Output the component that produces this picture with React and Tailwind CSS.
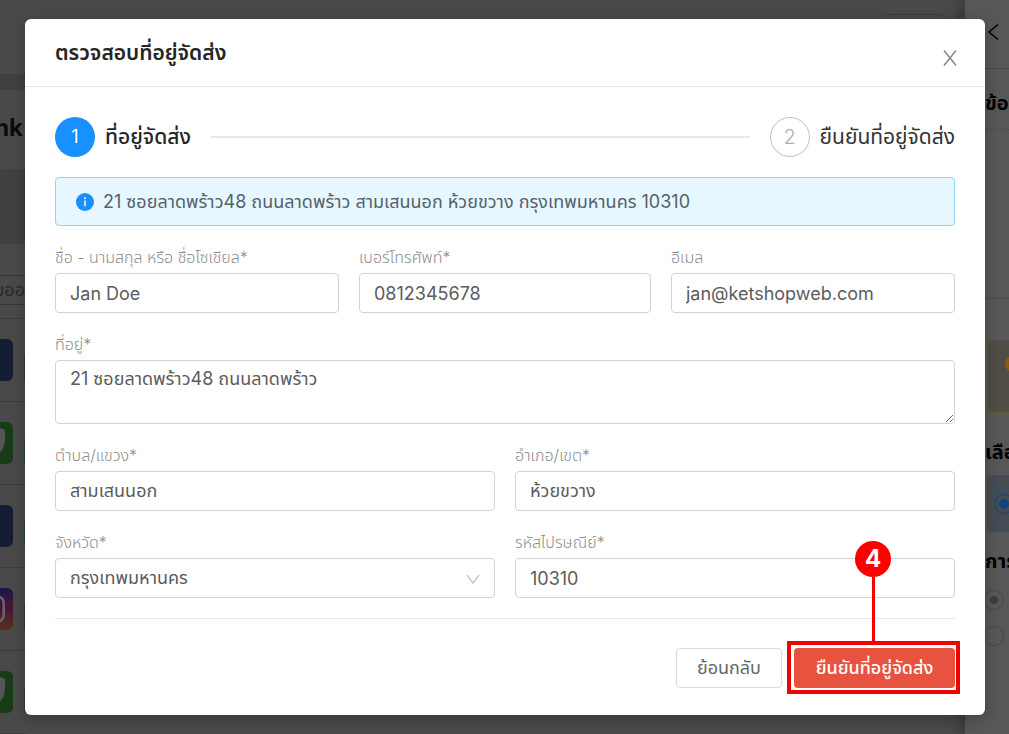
// App.jsx
import { useState } from "react";
import { FaInstagram } from "react-icons/fa";

const channels = [
  { id: 1, color: "bg-[#141d31]", accent: "bg-[#3a3a3a]", type: "facebook" },
  { id: 2, color: "bg-[#183c18]", accent: "bg-[#2b4640]", type: "line" },
  { id: 3, color: "bg-[#141d31]", accent: "bg-[#2b4640]", type: "facebook" },
  { id: 4, color: "bg-linear-to-b from-[#1d1248] via-[#4a1433] to-[#57301a]", accent: "bg-[#3a3a3a]", type: "instagram" },
  { id: 5, color: "bg-[#183c18]", accent: "bg-[#3a3a3a]", type: "line" },
];

function ChannelTile({ channel }) {
  return (
    <div className="flex h-[83px] shrink-0 items-center justify-between border-b border-[#3c3c3c]">
      <div className={`flex h-[42px] w-[13px] items-center justify-end overflow-hidden rounded-r-md ${channel.color}`}>
        {channel.type === "instagram" && <FaInstagram className="mr-[6px] size-8 shrink-0 text-[#6b6470]" />}
        {channel.type === "line" && (
          <svg viewBox="0 0 13 42" className="h-[42px] w-[13px]" aria-hidden="true">
            <path d="M0 6 L3 7 Q5 7 5 11 V16 Q5 26 0 30 Z" fill="#555" />
          </svg>
        )}
      </div>
      <div className={`mt-4 h-6 w-px ${channel.accent}`} />
    </div>
  );
}

function Backdrop() {
  return (
    <div className="absolute inset-0 flex overflow-hidden bg-[#494949]" aria-hidden="true">
      <div className="flex min-w-0 flex-1 flex-col">
        <div className="flex h-[74px] shrink-0 justify-end gap-[10px] overflow-hidden pt-[14px]">
          <div className="h-10 w-[62px] rounded-md border border-[#3c3c3c]" />
          <div className="h-10 w-[9px] rounded-l-md border border-r-0 border-[#3c3c3c]" />
        </div>
        <div className="h-4 shrink-0 bg-[#404143]" />
        <div className="flex h-[79px] w-[23px] shrink-0 items-center justify-end overflow-hidden pb-1 text-2xl font-bold text-[#0c0c0c]">
          nk
        </div>
        <div className="h-[75px] w-[25px] shrink-0 bg-[#404143]" />
        <div className="mt-[31px] flex h-[30px] w-[25px] shrink-0 items-center justify-end overflow-hidden border-y border-[#363636] text-lg text-[#2b2b2b]">
          บออ
        </div>
        <div className="mt-[13px] flex w-[25px] flex-col border-t border-[#3c3c3c]">
          {channels.map((c) => (
            <ChannelTile key={c.id} channel={c} />
          ))}
        </div>
      </div>
      <div className="flex w-11 shrink-0 flex-col bg-[#575757] pl-5 text-xl font-bold text-black shadow-[-6px_0_12px_rgba(0,0,0,0.2)]">
        <div className="flex h-[69px] shrink-0 items-center border-b border-[#474747] pb-1">
          <svg viewBox="0 0 16 20" className="ml-px h-5 w-4" fill="none" stroke="currentColor" strokeWidth="1.6">
            <path d="M12 2.5 L3 10 L12 17.5" />
          </svg>
        </div>
        <div className="flex h-[61px] shrink-0 items-center overflow-hidden border-b border-dashed border-[#4b4b4b] pt-2 whitespace-nowrap">ข้อ</div>
        <div className="h-[169px] shrink-0 border-b border-[#4b4b4b]" />
        <div className="mt-10 ml-[2px] flex h-[74px] shrink-0 overflow-hidden rounded-l border border-r-0 border-[#665b35] bg-[#4f4d45] pt-4 pl-[17px]">
          <div className="size-4 shrink-0 rounded-full bg-[#8a5a09]" />
        </div>
        <div className="flex h-[62px] shrink-0 items-center overflow-hidden pt-4 whitespace-nowrap">เลือ</div>
        <div className="ml-[2px] flex h-[57px] shrink-0 items-center overflow-hidden rounded-l border border-r-0 border-[#3f5058] bg-[#434c53] pl-[6px]">
          <div className="flex size-5 shrink-0 items-center justify-center rounded-full border border-[#11447a]">
            <div className="size-[10px] rounded-full bg-[#11447a]" />
          </div>
        </div>
        <div className="flex h-[58px] shrink-0 items-center overflow-hidden whitespace-nowrap">การ</div>
        <div className="flex shrink-0 flex-col gap-4">
          <div className="-ml-px flex size-5 items-center justify-center rounded-full border border-[#474747]">
            <div className="size-2 rounded-full bg-[#3c3c3c]" />
          </div>
          <div className="-ml-px size-5 rounded-full border border-[#474747]" />
        </div>
      </div>
    </div>
  );
}

const control =
  "w-full rounded border border-[#d3d3d3] bg-white px-[14px] text-lg/6 text-[#5c5c5c] outline-none focus:border-[#1890ff]";

function Field({ id, label, required, children }) {
  return (
    <div className="min-w-0">
      <label htmlFor={id} className="mb-[5px] block text-base/[22px] font-light whitespace-nowrap text-[#8c8c8c]">
        {label}
        {required && <span>*</span>}
      </label>
      {children}
    </div>
  );
}

function TextField({ id, label, required, value, onChange, type = "text" }) {
  return (
    <Field id={id} label={label} required={required}>
      <input id={id} name={id} type={type} value={value} onChange={onChange} className={`block h-10 ${control}`} />
    </Field>
  );
}

export default function App() {
  const [form, setForm] = useState({
    name: "Jan Doe",
    phone: "0812345678",
    email: "jan@ketshopweb.com",
    address: "21 ซอยลาดพร้าว48 ถนนลาดพร้าว",
    subdistrict: "สามเสนนอก",
    district: "ห้วยขวาง",
    province: "กรุงเทพมหานคร",
    zipcode: "10310",
  });

  const update = (e) => {
    const { name, value } = e.target;
    setForm((prev) => ({ ...prev, [name]: value }));
  };

  return (
    <div className="relative min-h-screen overflow-hidden pt-[19px] pr-6 pb-[19px] pl-[25px] font-['Inter','Noto_Sans_Thai','Noto_Sans',sans-serif]">
      <Backdrop />
      <div
        role="dialog"
        aria-labelledby="dialog-title"
        className="relative rounded-md bg-white shadow-[0_4px_14px_rgba(0,0,0,0.25)]"
      >
        <header className="flex h-[68px] items-center justify-between border-b border-[#e8e8e8] pr-[27px] pl-[30px]">
          <h1 id="dialog-title" className="text-[21px] font-semibold text-[#262626]">
            ตรวจสอบที่อยู่จัดส่ง
          </h1>
          <button type="button" aria-label="ปิด" className="mt-[10px] text-[#8c8c8c]">
            <svg viewBox="0 0 16 16" className="size-4" fill="none" stroke="currentColor" strokeWidth="1.6">
              <path d="M2 0.5 L14 15.5 M14 0.5 L2 15.5" />
            </svg>
          </button>
        </header>

        <form className="px-[30px] pt-[30px] pb-[27px]" onSubmit={(e) => e.preventDefault()}>
          <ol className="flex items-center">
            <li className="flex flex-1 items-center">
              <span className="flex size-10 items-center justify-center rounded-full bg-[#1890ff] text-lg text-white">1</span>
              <span className="ml-[10px] text-[21px]/8 font-medium whitespace-nowrap text-[#262626]">ที่อยู่จัดส่ง</span>
              <span className="mx-5 h-[2px] flex-1 bg-[#e8e8e8]" />
            </li>
            <li className="flex items-center">
              <span className="flex size-10 items-center justify-center rounded-full border border-[#bfbfbf] text-xl font-light text-[#b0b0b0]">2</span>
              <span className="ml-[10px] text-[21px]/8 whitespace-nowrap text-[#333]">ยืนยันที่อยู่จัดส่ง</span>
            </li>
          </ol>

          <div className="mt-5 flex h-[49px] items-center gap-[9px] rounded border border-[#91d5ea] bg-[#e6f7ff] px-5 text-lg text-[#56616a]">
            <svg viewBox="0 0 18 18" className="size-[18px] shrink-0" aria-hidden="true">
              <circle cx="9" cy="9" r="9" fill="#1890ff" />
              <circle cx="9" cy="5.2" r="1" fill="#fff" />
              <path d="M9 7.5 V13.2" stroke="#fff" strokeWidth="1.5" />
            </svg>
            <p className="whitespace-nowrap">21 ซอยลาดพร้าว48 ถนนลาดพร้าว สามเสนนอก ห้วยขวาง กรุงเทพมหานคร 10310</p>
          </div>

          <div className="mt-5 flex flex-col gap-5">
            <div className="grid grid-cols-[284fr_292fr_284fr] gap-5">
              <TextField id="name" label="ชื่อ - นามสกุล หรือ ชื่อโซเชียล" required value={form.name} onChange={update} />
              <TextField id="phone" label="เบอร์โทรศัพท์" required type="tel" value={form.phone} onChange={update} />
              <TextField id="email" label="อีเมล" type="email" value={form.email} onChange={update} />
            </div>

            <Field id="address" label="ที่อยู่" required>
              <textarea id="address" name="address" value={form.address} onChange={update} className={`block h-16 resize-y py-[6px] ${control}`} />
            </Field>

            <div className="grid grid-cols-2 gap-5">
              <TextField id="subdistrict" label="ตำบล/แขวง" required value={form.subdistrict} onChange={update} />
              <TextField id="district" label="อำเภอ/เขต" required value={form.district} onChange={update} />
              <Field id="province" label="จังหวัด" required>
                <div className="relative">
                  <select id="province" name="province" value={form.province} onChange={update} className={`block h-10 appearance-none ${control}`}>
                    <option>กรุงเทพมหานคร</option>
                    <option>นนทบุรี</option>
                    <option>ปทุมธานี</option>
                  </select>
                  <svg viewBox="0 0 14 10" className="pointer-events-none absolute top-4 right-[15px] h-[10px] w-[14px]" fill="none" stroke="#b5b5b5" strokeWidth="1.2">
                    <path d="M1 1 L7 9 L13 1" />
                  </svg>
                </div>
              </Field>
              <TextField id="zipcode" label="รหัสไปรษณีย์" required value={form.zipcode} onChange={update} />
            </div>
          </div>

          <div className="mt-5 flex justify-end gap-3 border-t border-[#e8e8e8] pt-[29px]">
            <button type="button" className="h-10 w-[106px] rounded border border-[#d9d9d9] bg-white text-lg/6 text-[#666]">
              ย้อนกลับ
            </button>
            <div className="relative">
              <button type="submit" className="h-10 w-[161px] rounded bg-[#e8533f] text-lg/6 font-medium whitespace-nowrap text-white">
                ยืนยันที่อยู่จัดส่ง
              </button>
              <div className="pointer-events-none absolute -top-[7px] -right-[5px] -bottom-[6px] -left-[7px] border-4 border-[#f00505]" />
              <div className="pointer-events-none absolute right-16 bottom-[47px] flex flex-col items-center">
                <span className="flex size-9 items-center justify-center rounded-full bg-[#ff0000] text-2xl font-bold text-white">4</span>
                <span className="h-16 w-[3px] bg-[#f00505]" />
              </div>
            </div>
          </div>
        </form>
      </div>
    </div>
  );
}
